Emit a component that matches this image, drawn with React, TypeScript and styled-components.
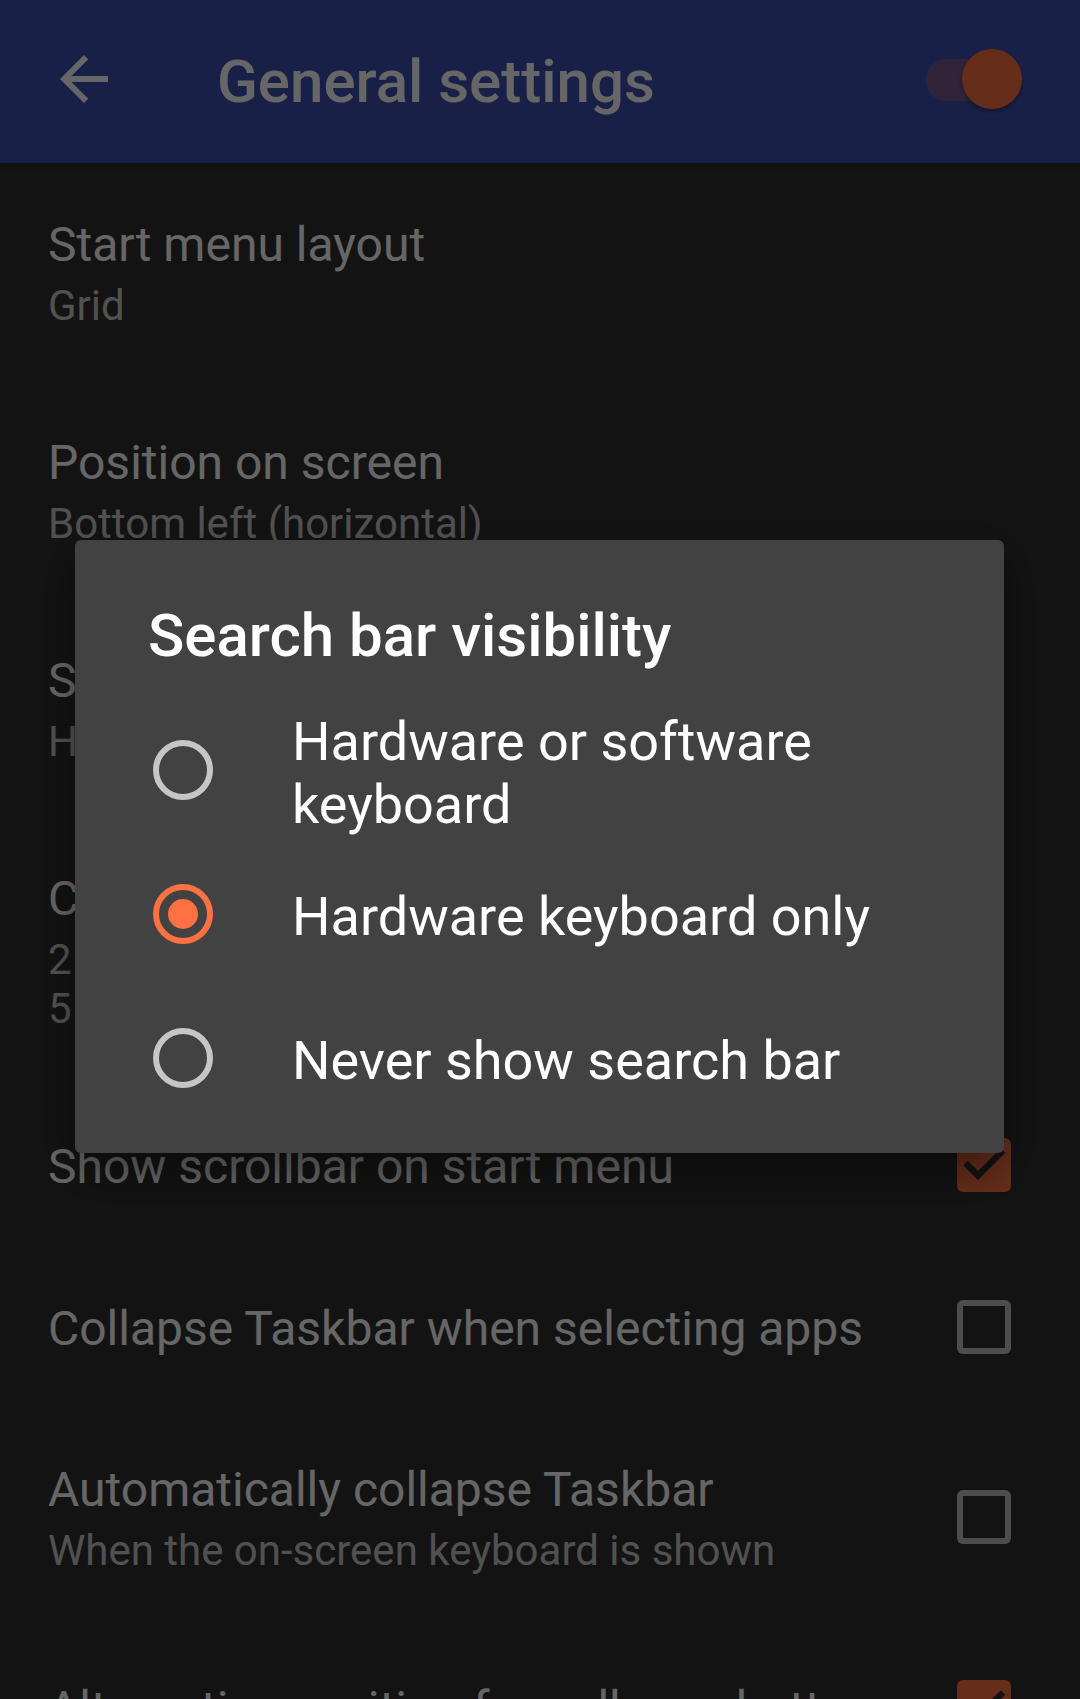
import React from 'react';
import styled, { createGlobalStyle } from 'styled-components';

const GlobalStyle = createGlobalStyle`
  html, body {
    margin: 0;
    padding: 0;
    overflow: hidden;
    background: #303030;
  }
  body {
    font-family: Roboto, "Noto Sans", "Liberation Sans", sans-serif;
    -webkit-font-smoothing: antialiased;
  }
`;

const Page = styled.div`
  width: 1080px;
  height: 1699px;
  background: #303030;
  overflow: hidden;
  display: flex;
  flex-direction: column;
`;

const Toolbar = styled.header`
  height: 163px;
  flex: none;
  box-sizing: border-box;
  background: #3f51b5;
  display: flex;
  align-items: center;
  padding: 0 58px 0 48px;
  box-shadow: 0 2px 5px rgba(0, 0, 0, 0.35);
  position: relative;
  z-index: 1;
`;

const NavButton = styled.button`
  width: 72px;
  height: 72px;
  flex: none;
  border: 0;
  padding: 0;
  margin: 0 0 6px 0;
  background: none;
  display: flex;
  align-items: center;
  justify-content: center;
  color: #ffffff;
`;

const Title = styled.h1`
  flex: 1;
  margin: 0 0 0 97px;
  font-size: 60px;
  line-height: 70px;
  font-weight: 500;
  color: #ffffff;
`;

const SwitchRoot = styled.div`
  position: relative;
  width: 96px;
  height: 60px;
  flex: none;
  margin-bottom: 6px;
`;

const SwitchTrack = styled.div`
  position: absolute;
  left: 0;
  top: 10px;
  width: 90px;
  height: 42px;
  border-radius: 21px;
  background: rgba(255, 112, 67, 0.3);
`;

const SwitchThumb = styled.div`
  position: absolute;
  right: 0;
  top: 0;
  width: 60px;
  height: 60px;
  border-radius: 50%;
  background: #ff7043;
  box-shadow: 0 3px 4px rgba(0, 0, 0, 0.35);
`;

const List = styled.div`
  display: flex;
  flex-direction: column;
`;

const Row = styled.div`
  display: flex;
  align-items: center;
  gap: 40px;
  padding: 54px 69px 51px 48px;
`;

const RowText = styled.div`
  flex: 1;
  min-width: 0;
`;

const RowTitle = styled.div`
  font-size: 48px;
  line-height: 56px;
  color: #ffffff;
  white-space: nowrap;
`;

const RowSummary = styled.div`
  margin-top: 8px;
  font-size: 42px;
  line-height: 49px;
  color: rgba(255, 255, 255, 0.76);
  white-space: pre-line;
`;

const CheckBox = styled.div<{ $checked: boolean }>`
  width: 54px;
  height: 54px;
  flex: none;
  margin-bottom: 3px;
  border-radius: 6px;
  background: ${(p) => (p.$checked ? '#ff7043' : 'transparent')};
  box-shadow: ${(p) => (p.$checked ? 'none' : 'inset 0 0 0 6px rgba(255, 255, 255, 0.7)')};
  display: flex;
`;

const Scrim = styled.div`
  position: fixed;
  inset: 0;
  background: rgba(0, 0, 0, 0.6);
  z-index: 10;
`;

const Dialog = styled.div`
  position: fixed;
  top: 540px;
  left: 75px;
  width: 929px;
  box-sizing: border-box;
  padding: 61px 0 23px;
  background: #424242;
  border-radius: 6px;
  box-shadow: 0 24px 38px rgba(0, 0, 0, 0.25), 0 9px 46px rgba(0, 0, 0, 0.2);
  z-index: 11;
`;

const DialogTitle = styled.h2`
  margin: 0 73px 27px;
  font-size: 60px;
  line-height: 70px;
  font-weight: 500;
  color: #ffffff;
`;

const Option = styled.div`
  display: flex;
  align-items: center;
  min-height: 144px;
  box-sizing: border-box;
  padding: 0 48px 0 78px;
`;

const RadioCircle = styled.span<{ $on: boolean }>`
  width: 60px;
  height: 60px;
  flex: none;
  box-sizing: border-box;
  border-radius: 50%;
  border: 6px solid ${(p) => (p.$on ? '#ff7043' : 'rgba(255, 255, 255, 0.7)')};
  display: flex;
  align-items: center;
  justify-content: center;
`;

const RadioDot = styled.span`
  width: 30px;
  height: 30px;
  border-radius: 50%;
  background: #ff7043;
`;

const OptionText = styled.span`
  flex: 1;
  margin-left: 79px;
  padding-top: 5px;
  font-size: 54px;
  line-height: 63px;
  color: #ffffff;
`;

const ArrowBack = () => (
  <svg width="72" height="72" viewBox="0 0 24 24" fill="currentColor">
    <path d="M20 11H7.83l5.59-5.59L12 4l-8 8 8 8 1.41-1.41L7.83 13H20v-2z" />
  </svg>
);

const CheckMark = () => (
  <svg width="54" height="54" viewBox="0 0 54 54">
    <polyline points="8.5,25 21,37.5 46,12.5" fill="none" stroke="#303030" strokeWidth="6.5" />
  </svg>
);

type Pref = { title: string; summary?: string; check?: boolean };

const prefs: Pref[] = [
  { title: 'Start menu layout', summary: 'Grid' },
  { title: 'Position on screen', summary: 'Bottom left (horizontal)' },
  { title: 'Search bar visibility', summary: 'Hardware keyboard only' },
  { title: 'Columns and rows in start menu', summary: '2 columns in portrait orientation\n5 columns in landscape orientation' },
  { title: 'Show scrollbar on start menu', check: true },
  { title: 'Collapse Taskbar when selecting apps', check: false },
  { title: 'Automatically collapse Taskbar', summary: 'When the on-screen keyboard is shown', check: false },
  { title: 'Alternative position for collapse button', check: true },
  { title: 'Show Taskbar on home screen', check: true },
];

const options = ['Hardware or software keyboard', 'Hardware keyboard only', 'Never show search bar'];

export default function App() {
  return (
    <>
      <GlobalStyle />
      <Page>
        <Toolbar>
          <NavButton aria-label="Back">
            <ArrowBack />
          </NavButton>
          <Title>General settings</Title>
          <SwitchRoot>
            <SwitchTrack />
            <SwitchThumb />
          </SwitchRoot>
        </Toolbar>
        <List>
          {prefs.map((p) => (
            <Row key={p.title}>
              <RowText>
                <RowTitle>{p.title}</RowTitle>
                {p.summary && <RowSummary>{p.summary}</RowSummary>}
              </RowText>
              {p.check !== undefined && (
                <CheckBox $checked={p.check}>{p.check && <CheckMark />}</CheckBox>
              )}
            </Row>
          ))}
        </List>
      </Page>
      <Scrim />
      <Dialog>
        <DialogTitle>Search bar visibility</DialogTitle>
        {options.map((o, i) => (
          <Option key={o}>
            <RadioCircle $on={i === 1}>{i === 1 && <RadioDot />}</RadioCircle>
            <OptionText>{o}</OptionText>
          </Option>
        ))}
      </Dialog>
    </>
  );
}
